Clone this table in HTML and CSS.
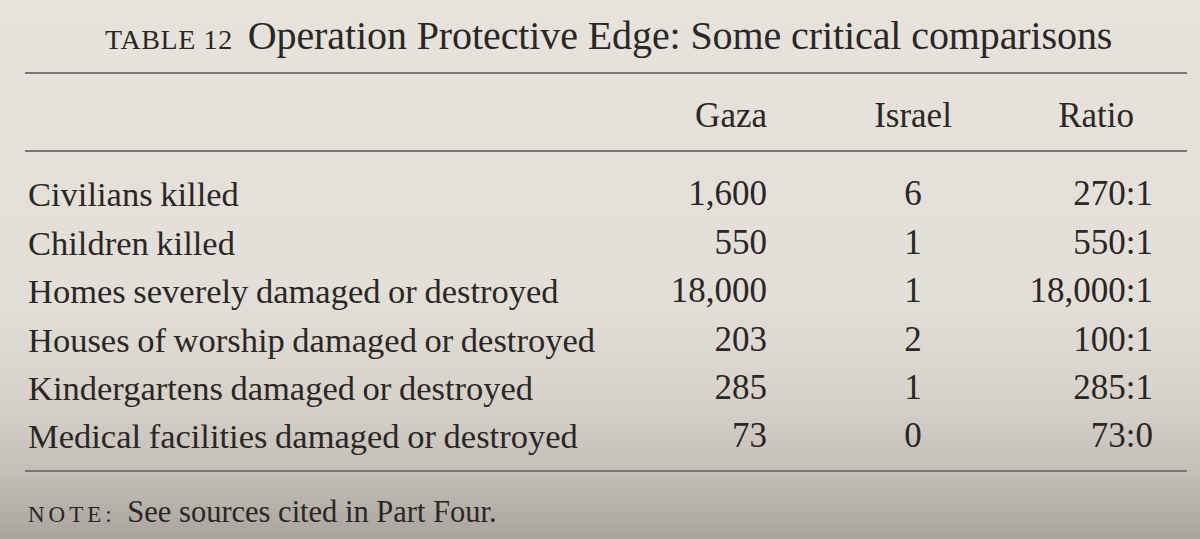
FILE: index.html
```html
<!DOCTYPE html>
<html lang="en">
<head>
<meta charset="utf-8">
<title>Table 12 — Operation Protective Edge</title>
<link rel="stylesheet" href="styles.css">
</head>
<body>
<div class="page">
  <h1 class="caption"><span class="caption-label">Table 12</span><span class="caption-title">Operation Protective Edge: Some critical comparisons</span></h1>
  <table class="data">
    <colgroup>
      <col class="col-label">
      <col class="col-gaza">
      <col class="col-israel">
      <col class="col-ratio">
    </colgroup>
    <thead>
      <tr>
        <th class="label"></th>
        <th class="gaza">Gaza</th>
        <th class="israel">Israel</th>
        <th class="ratio ratio-head">Ratio</th>
      </tr>
    </thead>
    <tbody>
      <tr class="first"><td class="label">Civilians killed</td><td class="gaza">1,600</td><td class="israel">6</td><td class="ratio">270:1</td></tr>
      <tr><td class="label">Children killed</td><td class="gaza">550</td><td class="israel">1</td><td class="ratio">550:1</td></tr>
      <tr><td class="label">Homes severely damaged or destroyed</td><td class="gaza">18,000</td><td class="israel">1</td><td class="ratio">18,000:1</td></tr>
      <tr><td class="label">Houses of worship damaged or destroyed</td><td class="gaza">203</td><td class="israel">2</td><td class="ratio">100:1</td></tr>
      <tr><td class="label">Kindergartens damaged or destroyed</td><td class="gaza">285</td><td class="israel">1</td><td class="ratio">285:1</td></tr>
      <tr class="last"><td class="label">Medical facilities damaged or destroyed</td><td class="gaza">73</td><td class="israel">0</td><td class="ratio">73:0</td></tr>
    </tbody>
  </table>
  <p class="note"><span class="note-label">Note:</span> See sources cited in Part Four.</p>
</div>
</body>
</html>
```

FILE: styles.css
```css
html, body {
  margin: 0;
  padding: 0;
}

body {
  width: 1200px;
  height: 539px;
  overflow: hidden;
  background: linear-gradient(to bottom, #e6e2dc 0px, #e2ded8 300px, #d6d2cb 400px, #c4c0b9 470px, #a9a59e 539px);
  font-family: "Liberation Serif", "Times New Roman", serif;
  color: #2b2724;
}

.page {
  padding: 0 13px 0 25px;
}

.caption {
  margin: 0;
  padding: 14px 0 14px 80px;
  font-weight: normal;
  font-size: 40px;
  line-height: 44px;
  white-space: nowrap;
}

.caption-label {
  display: inline-block;
  font-size: 28px;
  line-height: 28px;
  text-transform: uppercase;
  letter-spacing: 0.6px;
  margin-right: 15px;
}

.caption-title {
  letter-spacing: -0.1px;
}

.data {
  width: 100%;
  border-collapse: collapse;
  border-top: 2px solid #7a7671;
  border-bottom: 2px solid #7a7671;
  font-size: 35px;
  line-height: 48.4px;
}

.col-label { width: 595px; }
.col-gaza { width: 233px; }
.col-israel { width: 120px; }
.col-ratio { width: 214px; }

.data th,
.data td {
  padding: 0;
  font-weight: normal;
  white-space: nowrap;
  vertical-align: middle;
}

.data thead tr {
  border-bottom: 2px solid #7a7671;
}

.data thead th {
  padding-top: 18px;
  padding-bottom: 10px;
}

.label {
  text-align: left;
  padding-left: 3px !important;
  font-size: 34.5px;
  word-spacing: -1px;
}

.gaza {
  text-align: right;
  padding-right: 86px !important;
}

.israel {
  text-align: center;
}

.ratio {
  text-align: right;
  padding-right: 34px !important;
}

.ratio-head {
  padding-right: 53px !important;
}

.data tr.first td {
  padding-top: 18px;
}

.data tr.last td {
  padding-bottom: 9px;
}

.note {
  margin: 0;
  padding: 20px 0 0 3px;
  font-size: 30.5px;
  line-height: 40px;
}

.note-label {
  font-size: 23px;
  text-transform: uppercase;
  letter-spacing: 4px;
  margin-right: 4px;
}
```
